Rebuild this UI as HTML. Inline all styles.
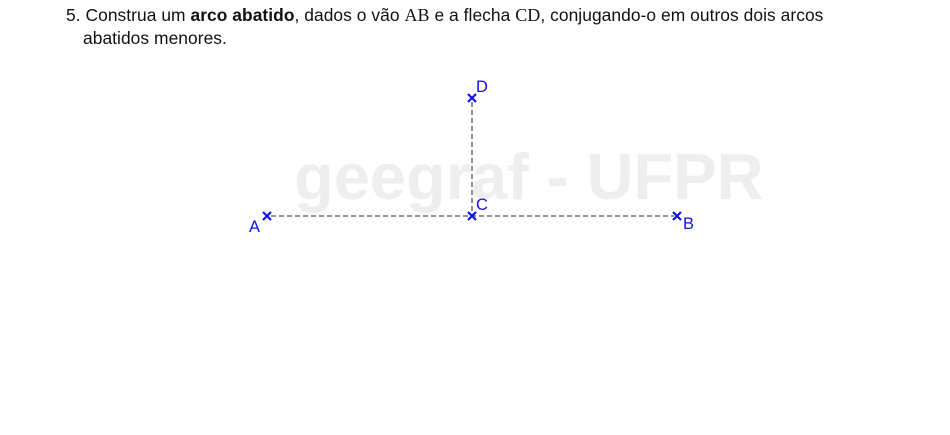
<!DOCTYPE html>
<html><head><meta charset="utf-8"><style>
body{margin:0;width:950px;height:435px;background:#fff;position:relative;overflow:hidden;font-family:"Liberation Sans",sans-serif;}
.t{position:absolute;left:66px;top:4px;font-size:17.4px;color:#111;line-height:23px;white-space:nowrap;letter-spacing:0.05px}
.s{font-family:"Liberation Serif",serif;font-size:18px}
</style></head><body>
<div class="t">5. Construa um <b>arco abatido</b>, dados o vão <span class="s">AB</span> e a flecha <span class="s">CD</span>, conjugando-o em outros dois arcos<br><span style="padding-left:17px">abatidos menores.</span></div>
<svg width="950" height="435" style="position:absolute;left:0;top:0">
<text x="294" y="199" font-family="Liberation Sans" font-weight="bold" font-size="65" fill="#eeeeee">geegraf - UFPR</text>
<g stroke="#555" stroke-width="1.3" stroke-dasharray="5,3" fill="none">
<line x1="271" y1="216" x2="674" y2="216"/>
<line x1="472" y1="102" x2="472" y2="216"/>
</g>
<g stroke="#1010e8" stroke-width="2.2" fill="none">
<path d="M263 212l8 8M271 212l-8 8"/>
<path d="M468 212l8 8M476 212l-8 8"/>
<path d="M673 212l8 8M681 212l-8 8"/>
<path d="M468 94l8 8M476 94l-8 8"/>
</g>
<g fill="#1010e8" font-family="Liberation Sans" font-size="16.5">
<text x="249" y="232">A</text>
<text x="683" y="229">B</text>
<text x="476" y="210">C</text>
<text x="476" y="92">D</text>
</g>
</svg>
</body></html>
